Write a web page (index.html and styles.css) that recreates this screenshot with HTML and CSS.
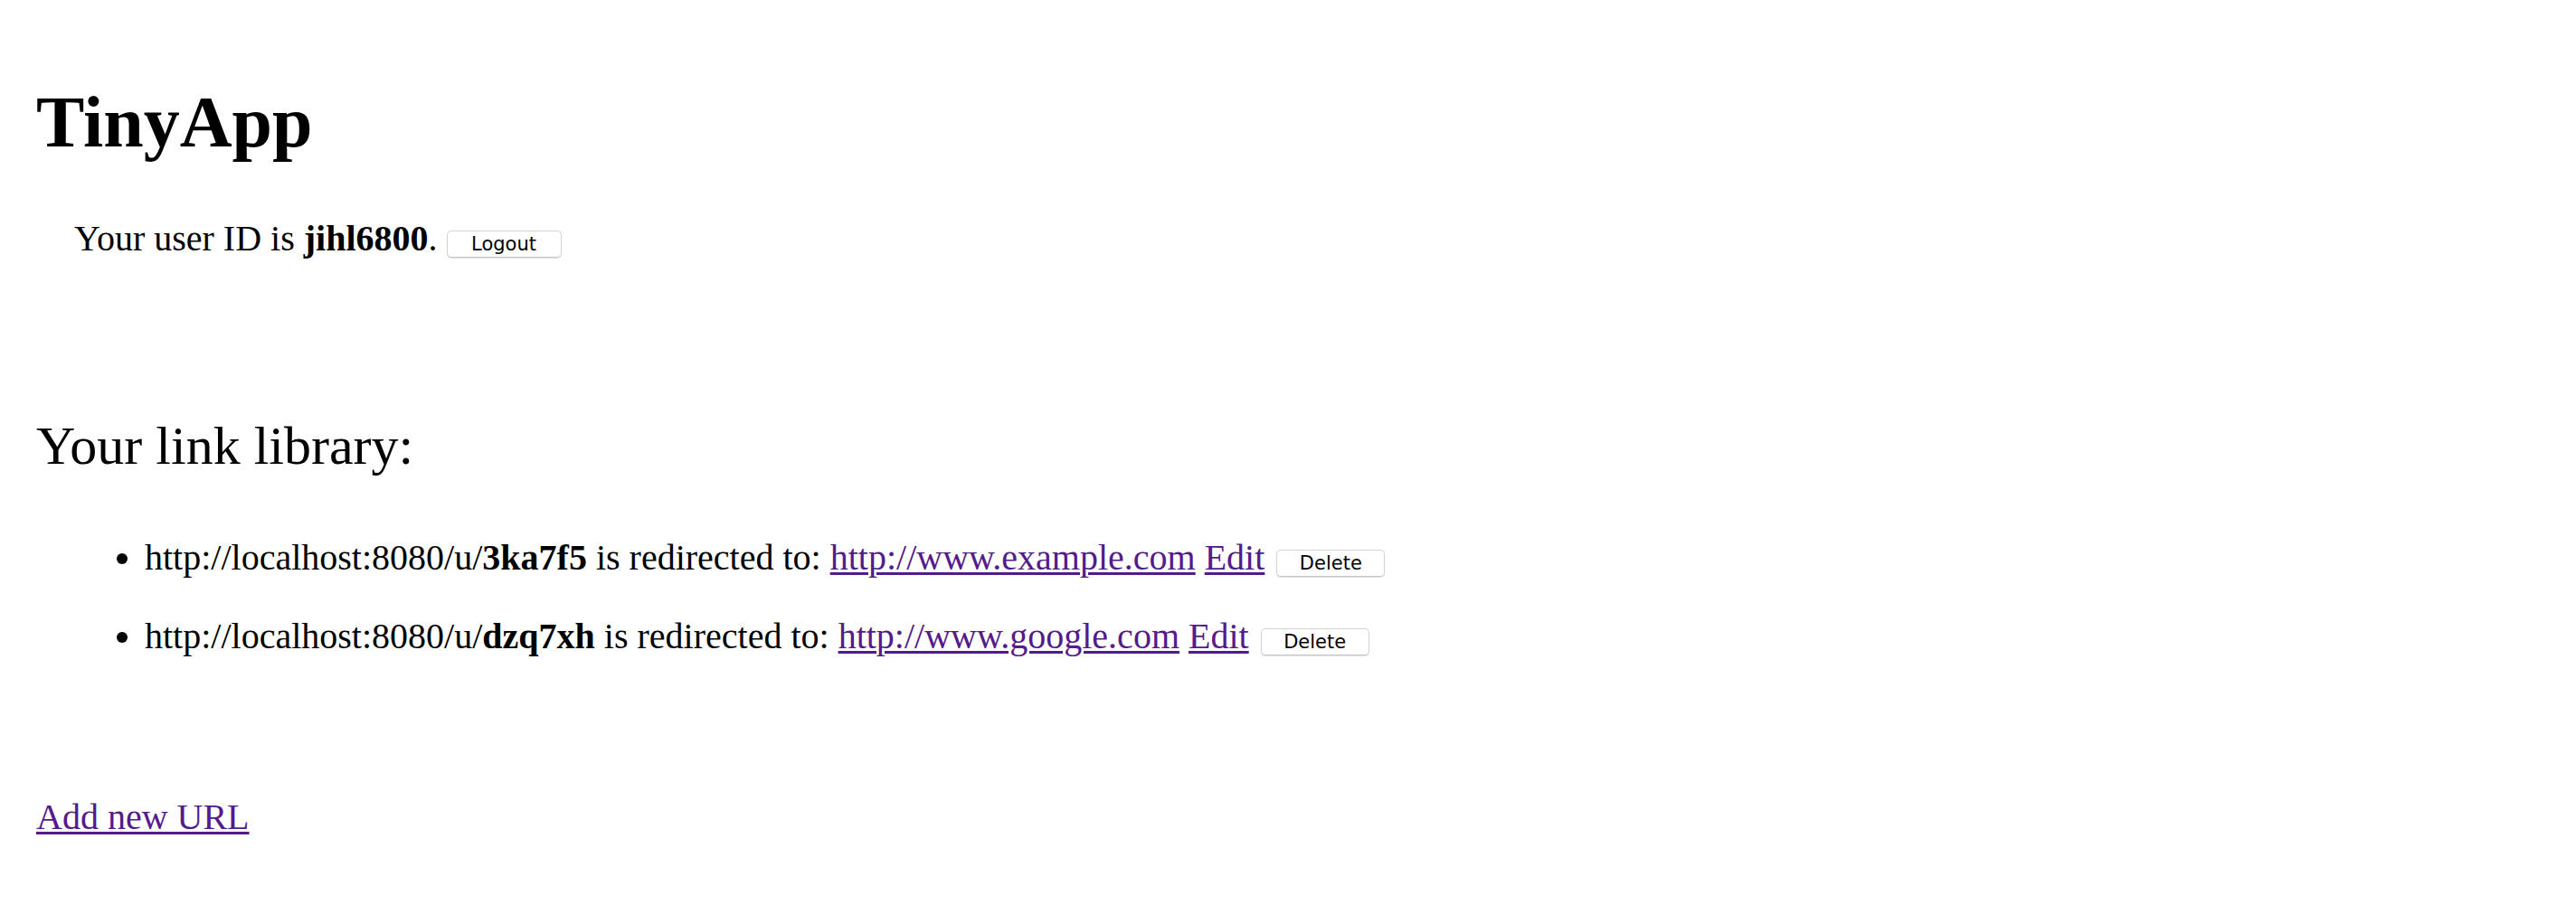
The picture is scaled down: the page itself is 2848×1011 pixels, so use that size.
FILE: index.html
```html
<!DOCTYPE html>
<html lang="en">
<head>
<meta charset="utf-8">
<title>TinyApp</title>
<link rel="stylesheet" href="styles.css">
</head>
<body>
<main class="page">
  <h1 class="title">TinyApp</h1>
  <p class="user">Your user ID is <b>jihl6800</b>. <button class="btn btn-logout" type="button">Logout</button></p>
  <h2 class="library">Your link library:</h2>
  <ul class="links">
    <li class="link-item">http://localhost:8080/u/<b>3ka7f5</b> is redirected to: <a class="link" href="#">http://www.example.com</a> <a class="link" href="#">Edit</a> <button class="btn btn-delete" type="button">Delete</button></li>
    <li class="link-item">http://localhost:8080/u/<b>dzq7xh</b> is redirected to: <a class="link" href="#">http://www.google.com</a> <a class="link" href="#">Edit</a> <button class="btn btn-delete" type="button">Delete</button></li>
  </ul>
  <a class="link add" href="#">Add new URL</a>
</main>
</body>
</html>
```

FILE: styles.css
```css
html, body {
  margin: 0;
  padding: 0;
  background: #ffffff;
}

body {
  font-family: "Liberation Serif", "Times New Roman", serif;
  font-size: 40px;
  line-height: 46px;
  color: #000000;
}

.page {
  padding: 0 40px;
  display: flow-root;
}

.title {
  font-size: 80px;
  line-height: 92px;
  font-weight: bold;
  margin: 89px 0 0 0;
}

.user {
  margin: 60px 0 0 0;
  padding-left: 42px;
}

.library {
  font-size: 60px;
  line-height: 69px;
  font-weight: normal;
  margin: 172px 0 0 0;
}

.links {
  margin: 66px 0 0 0;
  padding-left: 120px;
}

.link-item {
  margin: 0 0 41px 0;
}

.link-item:last-child {
  margin-bottom: 0;
}

.link {
  color: #551a8b;
  text-decoration: underline;
  text-decoration-thickness: 3px;
  text-underline-offset: 3px;
}

.add {
  display: inline-block;
  margin-top: 154px;
}

.btn {
  font-family: "DejaVu Sans", "Liberation Sans", Arial, sans-serif;
  font-size: 21px;
  line-height: 24px;
  color: #000000;
  background: #ffffff;
  border: 1px solid #d4d4d4;
  border-bottom-color: #c4c4c4;
  border-radius: 5px;
  box-shadow: 0 1px 1px rgba(0, 0, 0, 0.12);
  height: 30px;
  padding: 0;
  margin: 0 0 0 3px;
  vertical-align: baseline;
  text-align: center;
}

.btn-logout {
  width: 127px;
  margin-left: 0;
}

.btn-delete {
  width: 120px;
}
```
